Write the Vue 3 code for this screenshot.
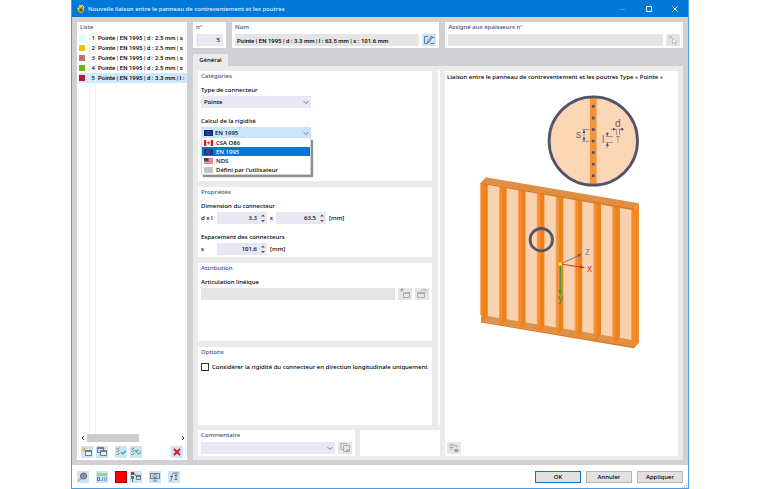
<template>
  <div class="window">
    <!-- Barre de titre -->
    <header class="title-bar">
      <svg class="app-icon" viewBox="0 0 10 10">
        <path d="M3 1h3v2H3zM1 4l3-1 1 2-3 2z" fill="#f5c518" />
        <circle cx="5" cy="6" r="2.4" fill="#6b5a20" stroke="#f7c520" />
        <path d="M6 1l2 2-1 2" stroke="#ffe9a0" fill="none" />
      </svg>
      <h1>Nouvelle liaison entre le panneau de contreventement et les poutres</h1>
      <div class="window-buttons">
        <button aria-label="Réduire"><svg viewBox="0 0 8 8"><path d="M1 4.500h5" stroke="#3f97e4" /></svg></button>
        <button aria-label="Agrandir"><svg viewBox="0 0 8 8"><path d="M1.500 1.500h5v5h-5z" stroke="#fff" fill="none" /></svg></button>
        <button aria-label="Fermer"><svg viewBox="0 0 8 8"><path d="M1.500 1.500l5 5M6.500 1.500l-5 5" stroke="#fff" /></svg></button>
      </div>
    </header>

    <main class="body">
      <!-- Liste -->
      <aside class="list-panel">
        <h2>Liste</h2>
        <ul class="list">
          <li
            v-for="item in items"
            :key="item.no"
            :class="{ selected: item.no === selectedNo }"
            @click="selectedNo = item.no"
          >
            <span class="swatch" :style="{ background: item.color }"></span>
            <span class="no">{{ item.no }}</span>
            <span class="name">{{ item.name }}</span>
          </li>
          <li class="filler"><span></span><span class="no"></span><span></span></li>
        </ul>
        <div class="scrollbar">
          <svg viewBox="0 0 8 8"><path d="M5 2L3 4l2 2" /></svg>
          <div class="track"><div class="thumb"></div></div>
          <svg viewBox="0 0 8 8"><path d="M3 2l2 2-2 2" /></svg>
        </div>
        <div class="list-tools">
          <button class="tool" aria-label="Nouveau">
            <svg viewBox="0 0 12 12"><path d="M4.500 4.500h6v5h-6z" fill="#e8f3fc" stroke="#59616a" stroke-width=".8" /><path d="M4.500 5.500h6" class="dark" /><path d="M3 1v5M1 3.500h4M1.500 2l3 3M4.500 2l-3 3" stroke="#d9b320" stroke-width=".8" fill="none" /></svg>
          </button>
          <button class="tool" aria-label="Copier">
            <svg viewBox="0 0 12 12"><path d="M1.500 1.500h6v5h-6zM1.500 2.500h6" class="dark" /><path d="M4.500 4.500h6v5h-6z" fill="#e8f3fc" stroke="#59616a" stroke-width=".8" /><path d="M4.500 5.500h6" class="dark" /></svg>
          </button>
          <button class="tool spaced" aria-label="Tout sélectionner">
            <svg viewBox="0 0 12 12"><path d="M1.500 2.500l1 1 2-2M1.500 5l1 1 2-2M1.500 8l1 1 2-2" class="dark" /><path d="M6 6l1.500 2L11 5" stroke="#2aa860" fill="none" stroke-width="1.200" /></svg>
          </button>
          <button class="tool" aria-label="Inverser la sélection">
            <svg viewBox="0 0 12 12"><path d="M1.500 2.500l1 1 2-2M1.500 5l1 1 2-2M1.500 8l1 1 2-2" class="dark" /><path d="M6 5.500c1-2 3-2 4 0M7 7c1 1.500 3 1 4-1M6 4v2h2" stroke="#2aa860" stroke-width=".9" fill="none" /></svg>
          </button>
          <button class="tool delete" aria-label="Supprimer">
            <svg viewBox="0 0 12 12"><path d="M3 3l6 6M9 3l-6 6" stroke="#f01018" stroke-width="1.800" /></svg>
          </button>
        </div>
      </aside>

      <section class="content">
        <div class="head">
          <div class="card head-no">
            <h2><label for="no">n°</label></h2>
            <div class="row"><input id="no" class="field right" value="5" /></div>
          </div>
          <div class="card head-name">
            <h2><label for="name">Nom</label></h2>
            <div class="row">
              <input id="name" class="field gray full-name" value="Pointe | EN 1995 | d : 3.3 mm | l : 63.5 mm | s : 101.6 mm" />
              <button class="tool wide" aria-label="Modifier le nom">
                <svg viewBox="0 0 12 12"><path d="M5 2.500H1.500v7h3M7.500 9.500h4M9 3.500h2.500" class="dark" /><path d="M8.500 2l-3.500 5-.5 2 2-1.200 3-5z" class="dark" /></svg>
              </button>
            </div>
          </div>
          <div class="card head-assigned">
            <h2><label for="assigned">Assigné aux épaisseurs n°</label></h2>
            <div class="row">
              <input id="assigned" class="field gray" readonly />
              <button class="tool wide off" aria-label="Sélectionner" disabled>
                <svg viewBox="0 0 12 12"><path d="M2 1.500l3 3M5 1.500l-3 3" class="dim" /><path d="M5.500 4.500v5l1.500-1 1 2 1-.5-1-2h2z" fill="#fff" stroke="#aaa" stroke-width=".7" /></svg>
              </button>
            </div>
          </div>
        </div>

        <nav class="tabs"><button class="tab">Général</button></nav>

        <div class="tab-page">
          <div class="left">
            <div class="upper">
              <div class="cards">
                <div class="card grow-large">
                  <h2>Catégories</h2>
                  <label for="type" class="caption">Type de connecteur</label>
                  <div class="select-box">
                    <select id="type"><option>Pointe</option></select>
                    <svg class="chevron" viewBox="0 0 8 8"><path d="M1.500 3L4 5.500 6.500 3" /></svg>
                  </div>
                  <label for="rigidity" class="caption next">Calcul de la rigidité</label>
                  <div class="select-box open">
                    <select id="rigidity" v-model="standard">
                      <option v-for="s in standards" :key="s.id" :value="s.id">{{ s.label }}</option>
                    </select>
                    <svg class="flag current" viewBox="0 0 9 6"><path d="M0 0h9v6H0z" fill="#0b2c8c" /><circle cx="4.500" cy="3" r="1.600" fill="none" stroke="#b9ad4a" stroke-width=".7" stroke-dasharray=".6 .4" /></svg>
                    <svg class="chevron" viewBox="0 0 8 8"><path d="M1.500 3L4 5.500 6.500 3" /></svg>
                    <ul class="dropdown">
                      <li
                        v-for="s in standards"
                        :key="s.id"
                        :class="{ active: s.id === standard }"
                        @click="standard = s.id"
                      >
                        <svg class="flag" viewBox="0 0 9 6">
                          <template v-if="s.id === 'csa'">
                            <path d="M0 0h9v6H0z" fill="#fff" />
                            <path d="M0 0h2.300v6H0zM6.700 0H9v6H6.700zM4.500 1l.5 1 .9.200-.8 1.500h-.4V5h-.4V3.700h-.4L3.100 2.200 4 2z" fill="#e8101c" />
                          </template>
                          <template v-else-if="s.id === 'en'">
                            <path d="M0 0h9v6H0z" fill="#183a86" />
                            <circle cx="4.500" cy="3" r="1.600" fill="none" stroke="#b9ad4a" stroke-width=".7" stroke-dasharray=".6 .4" />
                          </template>
                          <template v-else-if="s.id === 'nds'">
                            <path d="M0 0h9v6H0z" fill="#f3c9cc" />
                            <path d="M0 .4h9M0 2h9M0 3.600h9M0 5.200h9" stroke="#d84a54" stroke-width=".8" />
                            <path d="M0 0h4.500v3.200H0z" fill="#34457e" />
                          </template>
                          <path v-else d="M0 0h9v6H0z" fill="#c4c4c4" />
                        </svg>
                        {{ s.label }}
                      </li>
                    </ul>
                  </div>
                </div>

                <div class="card">
                  <h2>Propriétés</h2>
                  <span class="caption">Dimension du connecteur</span>
                  <div class="measure">
                    <label for="d">d x l</label>
                    <div class="spin"><input id="d" class="field" value="3.3" /><svg viewBox="0 0 8 12"><path d="M2 4.500L4 2.500l2 2zM2 8l2 2 2-2z" /></svg></div>
                    <label for="l" class="times">x</label>
                    <div class="spin"><input id="l" class="field" value="63.5" /><svg viewBox="0 0 8 12"><path d="M2 4.500L4 2.500l2 2zM2 8l2 2 2-2z" /></svg></div>
                    <span class="unit">[mm]</span>
                  </div>
                  <span class="caption next">Espacement des connecteurs</span>
                  <div class="measure">
                    <label for="s">s</label>
                    <div class="spin"><input id="s" class="field" value="101.6" /><svg viewBox="0 0 8 12"><path d="M2 4.500L4 2.500l2 2zM2 8l2 2 2-2z" /></svg></div>
                    <span class="unit">[mm]</span>
                  </div>
                </div>

                <div class="card grow">
                  <h2>Attribution</h2>
                  <label for="hinge" class="caption">Articulation linéique</label>
                  <div class="row">
                    <input id="hinge" class="field gray" readonly />
                    <button class="tool wide off" aria-label="Nouvelle articulation" disabled>
                      <svg viewBox="0 0 12 12"><path d="M4.500 4.500h6v5h-6zM4.500 5.500h6M1 1.500h4M3 0v4M1.500 3.500l2-2" class="dim" /></svg>
                    </button>
                    <button class="tool wide off" aria-label="Modifier l'articulation" disabled>
                      <svg viewBox="0 0 12 12"><path d="M1.500 4.500h7v5h-7zM1.500 5.500h7M5 3.500l2-2h3v3" class="dim" /></svg>
                    </button>
                  </div>
                </div>

                <div class="card grow">
                  <h2>Options</h2>
                  <label class="check">
                    <input type="checkbox" />
                    Considérer la rigidité du connecteur en direction longitudinale uniquement
                  </label>
                </div>
              </div>
              <div class="splitter"></div>
            </div>

            <div class="lower">
              <div class="card comment">
                <h2><label for="comment">Commentaire</label></h2>
                <div class="row">
                  <div class="select-box stretch">
                    <select id="comment"><option></option></select>
                    <svg class="chevron" viewBox="0 0 8 8"><path d="M1.500 3L4 5.500 6.500 3" /></svg>
                  </div>
                  <button class="tool wide off" aria-label="Commentaires" disabled>
                    <svg viewBox="0 0 12 12"><path d="M2 1.500h6v6H2z" class="dim" /><path d="M4.500 3.500h6v6h-6z" fill="#e5e5e5" stroke="#999" stroke-width=".7" /><path d="M7.500 7.500h2v2h-2z" fill="#999" /></svg>
                  </button>
                </div>
              </div>
              <div class="card empty"></div>
            </div>
          </div>

          <!-- Aperçu -->
          <div class="card preview">
            <p>Liaison entre le panneau de contreventement et les poutres Type « Pointe »</p>
            <svg class="drawing" viewBox="445 82 233 280">
              <!-- Panneau -->
              <polygon points="481,182 634,209 634,348 481,322" fill="#f9d2b0" />
              <polygon points="487,316 633,340 633,347 481,321" fill="#dd9149" />
              <g v-for="stud in studs" :key="stud.x">
                <polygon :points="stud.light" fill="#f4892b" />
                <polygon :points="stud.dark" fill="#f0801a" />
                <polygon :points="stud.edge" fill="#f79a45" />
              </g>
              <polygon points="634,209.500 639,203.500 639,343 634,348" fill="#f28a27" />
              <polygon points="481,182.500 486,177.300 639,203.300 634,209.500" fill="#df8f45" />
              <path d="M481 183.200L634 209.500M481 321.800L634 347.500" stroke="#e0761a" stroke-width="1.300" />
              <!-- Loupe -->
              <circle cx="541.300" cy="239.700" r="11.200" fill="none" stroke="#53546c" stroke-width="2.800" />
              <circle cx="593.300" cy="141" r="44.200" fill="#fad6b5" />
              <rect x="590" y="97" width="6.600" height="88" fill="#f59436" />
              <circle cx="593.300" cy="141" r="44.200" fill="none" stroke="#53546c" stroke-width="2.800" />
              <circle v-for="n in 7" :key="n" cx="593.300" :cy="94.800 + n * 11.550" r="1.600" fill="#53546c" />
              <!-- Cotes -->
              <g fill="none" stroke="#66677a" stroke-width=".6">
                <path d="M582 129.500h7.500M582 141.300h7.500M584 131v9" />
                <path d="M606 136.500h7M606 142.500h7M607.300 132v3M607.300 144v4" />
                <path d="M616 136.500h4M618 136.500v6M611 129.300h5M619 129.300h5M616.500 129v6M619.500 129v6" />
              </g>
              <path d="M584 129.500l-1.500 3.500h3zM584 141.300l-1.500-3.500h3zM607.300 136.500l-1.500-3.500h3zM607.300 142.500l-1.500 3.500h3zM616 129.300l-3-1.500v3zM620 129.300l3-1.500v3z" fill="#53546c" />
              <g class="dims">
                <text x="576" y="138">s</text>
                <text x="602" y="143">l</text>
                <text x="615" y="127">d</text>
              </g>
              <!-- Repère -->
              <g stroke-width="1">
                <path d="M560.300 264L580 255" stroke="#77779a" />
                <path d="M560.300 264l20 2.900" stroke="#d93a18" />
                <path d="M560.300 264v26" stroke="#1ea24c" />
              </g>
              <path d="M582.500 253.800l-5.500.700 1.300 2.800z" fill="#62627e" />
              <path d="M585.500 267.700l-5.300-2.300-.4 3.200z" fill="#c92f12" />
              <path d="M560.300 295.500l-1.800-5.500h3.600z" fill="#1ea24c" />
              <circle cx="560.300" cy="264" r="2" fill="#ffe000" />
              <g class="axes">
                <text x="585" y="255" fill="#8a8ab2">z</text>
                <text x="587" y="272" fill="#d3401e">x</text>
                <text x="558" y="302" fill="#3d9a3a">y</text>
              </g>
            </svg>
            <button class="tool wide off" aria-label="Aperçu" disabled>
              <svg viewBox="0 0 12 12"><path d="M2 2.500h3v3H2zM3 6v3M6 3.500h3v2M6 7.500h4v2H7z" class="dim" /><path d="M7 7h3v3H7z" fill="#999" /></svg>
            </button>
          </div>
        </div>
      </section>
    </main>

    <!-- Pied -->
    <footer class="footer">
      <button class="tool" aria-label="Aide">
        <svg viewBox="0 0 12 12"><circle cx="6.500" cy="5" r="3" fill="#9ba3aa" stroke="#59616a" /><path d="M4 7.500L1.500 10M6 4.500c.5-1.500 2-.5 1 .5l-.5 1" class="dark" /></svg>
      </button>
      <button class="tool gap-7" aria-label="Unités">
        <svg viewBox="0 0 12 12"><path d="M1 2h10v3H1z" fill="#a3cf94" /><path d="M6 6h5v4H6z" fill="#7fa8e8" /><path d="M1.500 6.500h2v3h-2zM4.500 9.500h1" class="dark" /><path d="M7.500 6v4M9.500 6v4" stroke="#fff" stroke-width=".5" /></svg>
      </button>
      <button class="tool red gap-7" aria-label="Couleur"></button>
      <button class="tool gap-3" aria-label="Affichage">
        <svg viewBox="0 0 12 12"><path d="M1 1h3v3H1z" fill="#bd3428" /><path d="M1 5h3v3H1z" fill="#3c8a45" /><path d="M2.500 8v3M4 2l2 3M6.500 4.500h4v4h-4zM6.500 5.500h4" class="dark" /></svg>
      </button>
      <button class="tool gap-7" aria-label="Vue">
        <svg viewBox="0 0 12 12"><path d="M1.500 2.500h9v5h-9zM4 10h4" class="dark" /><path d="M3.500 5c1-2 4-2 5 0-1 2-4 2-5 0zM6 5v4" stroke="#5e7482" stroke-width=".7" fill="#b7d2e0" /></svg>
      </button>
      <button class="tool gap-7" aria-label="Formules">
        <svg viewBox="0 0 12 12"><path d="M5.500 2c-2 0-1.500 8-3.500 8M2 5.500h3M5.500 2h5M8 2.500v6M6.500 8.500h3M6.500 4.500h3" class="dark" /></svg>
      </button>
      <div class="actions">
        <button class="primary">OK</button>
        <button>Annuler</button>
        <button>Appliquer</button>
      </div>
      <svg class="grip" viewBox="0 0 6 6"><path d="M4 1h1v1H4zM2 3h1v1H2zM4 3h1v1H4zM0 5h1v1H0zM2 5h1v1H2zM4 5h1v1H4z" fill="#b5b5b5" /></svg>
    </footer>
  </div>
</template>

<script setup>
import { ref } from 'vue'

const items = [
  { no: 1, color: '#ccffff', name: 'Pointe | EN 1995 | d : 2.5 mm | s' },
  { no: 2, color: '#f5c000', name: 'Pointe | EN 1995 | d : 2.5 mm | s' },
  { no: 3, color: '#c07070', name: 'Pointe | EN 1995 | d : 2.5 mm | s' },
  { no: 4, color: '#73b800', name: 'Pointe | EN 1995 | d : 2.5 mm | s' },
  { no: 5, color: '#b01a40', name: 'Pointe | EN 1995 | d : 3.3 mm | l :' }
]
const selectedNo = ref(5)

const standards = [
  { id: 'csa', label: 'CSA O86' },
  { id: 'en', label: 'EN 1995' },
  { id: 'nds', label: 'NDS' },
  { id: 'user', label: "Défini par l'utilisateur" }
]
const standard = ref('en')

// Bords haut et bas de la face avant
const topY = (x) => 183 + (x - 481) * 0.176
const frontY = (x) => 321.5 + (x - 481) * 0.169
const backY = (x) => 316 + (x - 487.5) * 0.166

const studs = Array.from({ length: 9 }, (_, i) => {
  const x = 481 + i * 18.87
  const mid = x + 2
  const end = x + 6.8
  return {
    x,
    light: `${x},${topY(x)} ${mid},${topY(mid)} ${mid},${frontY(mid)} ${x},${frontY(x)}`,
    dark: `${mid},${topY(mid)} ${end},${topY(end)} ${end},${backY(end)} ${mid},${frontY(mid)}`,
    edge: `${x - 0.8},${topY(x)} ${x},${topY(x)} ${x},${backY(x)} ${x - 0.8},${backY(x)}`
  }
})
</script>

<style>
body {
  background: #fff;
}
</style>

<style scoped>
* {
  box-sizing: border-box;
}

.window {
  display: flex;
  flex-direction: column;
  min-height: 100vh;
  margin: 0 71px;
  border: solid #4a9be2;
  border-width: 0 1px 1px;
  background: #fff;
  color: #000;
  font: 500 6px/10px "Noto Sans", "Open Sans", sans-serif;
}

h1,
h2,
p,
ul {
  margin: 0;
  padding: 0;
  font: inherit;
  list-style: none;
}

button,
input,
select {
  margin: 0;
  padding: 0;
  border: 0;
  border-radius: 0;
  color: inherit;
  font: inherit;
}

svg {
  display: block;
}

/* Barre de titre */
.title-bar {
  display: flex;
  align-items: center;
  height: 17px;
  padding-left: 4px;
  background: #0078d7;
  color: #e8f3fc;
}

.app-icon {
  width: 10px;
  height: 10px;
  margin-right: 2px;
}

.window-buttons {
  display: flex;
  margin-left: auto;
}

.window-buttons button {
  display: flex;
  align-items: center;
  justify-content: center;
  width: 26px;
  height: 17px;
  background: none;
}

.window-buttons svg {
  width: 8px;
  height: 8px;
}

/* Corps */
.body {
  display: flex;
  flex: 1;
  gap: 6px;
  padding: 5px;
  background: #d0d0d5;
}

h2 {
  color: #3c5288;
}

.list-panel {
  display: flex;
  flex-direction: column;
  width: 110px;
  padding: 0 0 2px 2px;
  background: #fff;
}

.list-panel h2 {
  padding-left: 1px;
}

.list {
  display: flex;
  flex: 1;
  flex-direction: column;
  padding-top: 1px;
}

.list li {
  display: grid;
  grid-template-columns: 10px 7px 1fr;
  height: 10px;
  white-space: nowrap;
}

.list li.filler {
  flex: 1;
}

.swatch {
  width: 6px;
  height: 6px;
  margin-top: 2px;
}

.no {
  border: solid #f0f0f0;
  border-width: 0 1px;
  text-align: right;
}

.name {
  min-width: 0;
  padding-left: 2px;
}

.name,
.full-name {
  font-family: Roboto, "Open Sans", sans-serif;
}

.selected {
  background: #cde8ff;
}

.scrollbar {
  display: flex;
  height: 8px;
  margin-bottom: 4px;
}

.scrollbar svg {
  width: 8px;
  height: 8px;
  fill: none;
  stroke: #404040;
}

.track {
  flex: 1;
}

.thumb {
  width: 57%;
  height: 8px;
  background: #cdcdcd;
}

.list-tools {
  display: flex;
  gap: 3px;
  padding: 0 4px 0 2px;
}

.tool {
  flex: none;
  width: 12px;
  height: 12px;
  background: #cce4f7;
}

.tool svg {
  width: 12px;
  height: 12px;
  margin: 0 auto;
}

.tool.wide {
  width: 14px;
}

.tool.off {
  background: #e5e5e5;
}

.tool.red {
  border: 1px solid #a00000;
  background: #f00;
}

.spaced {
  margin-left: 4px;
}

.delete {
  margin-left: auto;
}

.dark {
  fill: none;
  stroke: #59616a;
  stroke-width: 0.8;
}

.dim {
  fill: none;
  stroke: #999;
  stroke-width: 0.7;
}

.content {
  display: flex;
  flex: 1;
  flex-direction: column;
  min-width: 0;
}

.card {
  display: flex;
  flex-direction: column;
  padding: 0 3px 2px;
  background: #fff;
}

.head {
  display: flex;
  gap: 6px;
  margin-bottom: 6px;
}

.head .card {
  gap: 2px;
}

.head-no {
  width: 33px;
}

.head-name {
  flex: 207 1 0;
}

.head-assigned {
  flex: 238 1 0;
}

.row {
  display: flex;
  gap: 3px;
}

.field {
  flex: 1;
  width: 100%;
  min-width: 0;
  height: 12px;
  padding: 0 2px;
  background: #e8e8f2;
}

.field.gray {
  background: #e5e5e5;
}

.field.right {
  padding-right: 3px;
  text-align: right;
}

.tabs {
  display: flex;
}

.tab {
  width: 35px;
  height: 12px;
  background: #ebebeb;
}

.tab-page {
  display: flex;
  flex: 1;
  gap: 5px;
  padding: 5px 5px 4px;
  background: #ebebeb;
}

.left,
.cards {
  display: flex;
  flex-direction: column;
  gap: 6px;
}

.left {
  flex: 242 1 0;
  gap: 5px;
}

.upper {
  display: flex;
  flex: 1;
  gap: 6px;
}

.cards {
  flex: 1;
}

.grow-large {
  flex: 111 1 0;
}

.grow {
  flex: 78 1 0;
}

.splitter {
  width: 2px;
  background: #fff;
}

.caption {
  margin: 4px 0 1px;
}

.caption.next {
  margin-top: 8px;
}

.select-box {
  position: relative;
  width: 110px;
  height: 12px;
}

.select-box.stretch {
  flex: 1;
}

select {
  display: block;
  width: 100%;
  height: 12px;
  padding-left: 3px;
  background: #e8e8f2;
  appearance: none;
}

.open select {
  padding-left: 14px;
  background: #cce4f7;
}

.chevron {
  position: absolute;
  top: 2px;
  right: 1px;
  width: 8px;
  height: 8px;
  fill: none;
  stroke: #606060;
  stroke-width: 0.8;
  pointer-events: none;
}

.flag {
  width: 9px;
  height: 6px;
}

.flag.current {
  position: absolute;
  top: 3px;
  left: 3px;
}

.dropdown {
  position: absolute;
  z-index: 2;
  top: 11px;
  right: 0;
  left: 0;
  border: solid #d4d4d4;
  border-width: 0 1px 1px;
  background: #fff;
  box-shadow: 2px 2px 1px #909090;
}

.dropdown li {
  display: flex;
  align-items: center;
  gap: 3px;
  height: 9px;
  padding-left: 2px;
}

.dropdown .active {
  background: #0078d7;
  color: #fff;
}

.measure {
  display: grid;
  grid-template-columns: 16px 50px 9px 50px 1fr;
  align-items: center;
}

.spin {
  display: flex;
  background: #e8e8f2;
}

.spin .field {
  text-align: right;
}

.spin svg {
  width: 8px;
  height: 12px;
  fill: #505050;
}

.times {
  text-align: center;
}

.unit {
  padding-left: 3px;
}

.check {
  display: flex;
  align-items: center;
  gap: 3px;
  height: 12px;
  margin-top: 4px;
  white-space: nowrap;
}

.check input {
  width: 8px;
  height: 8px;
  border: 1px solid #333;
  background: #fff;
  appearance: none;
}

.lower {
  display: flex;
  gap: 5px;
}

.comment {
  flex: 160 1 0;
  gap: 2px;
}

.empty {
  flex: 78 1 0;
}

.preview {
  flex: 233 1 0;
  padding: 1px 0 2px;
}

.preview p {
  padding-left: 2px;
  white-space: nowrap;
}

.preview .tool {
  margin: auto 0 0 2px;
}

.drawing {
  width: 100%;
}

.dims,
.axes {
  font: 10px "Liberation Sans", Arial, sans-serif;
}

.dims {
  fill: #5c5d72;
}

/* Pied */
.footer {
  position: relative;
  display: flex;
  align-items: center;
  height: 23px;
  padding: 0 5px;
}

.gap-7 {
  margin-left: 7px;
}

.gap-3 {
  margin-left: 3px;
}

.actions {
  display: flex;
  gap: 5px;
  margin-left: auto;
}

.actions button {
  width: 46px;
  height: 12px;
  border: 1px solid #b4b4b4;
  background: #e1e1e1;
}

.actions .primary {
  border-color: #0078d7;
}

.grip {
  position: absolute;
  right: 0;
  bottom: 0;
  width: 6px;
  height: 6px;
}
</style>
